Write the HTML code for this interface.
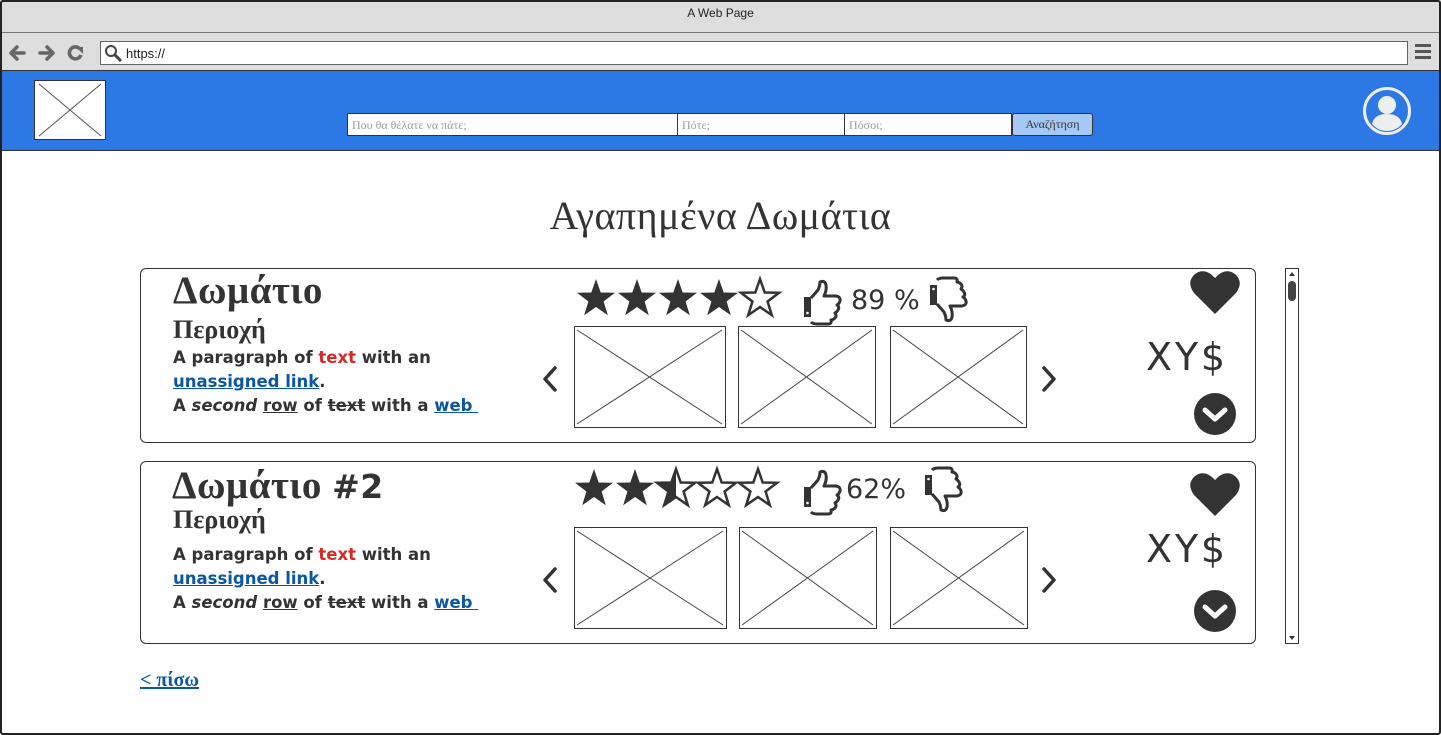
<!DOCTYPE html>
<html><head><meta charset="utf-8"><style>
*{margin:0;padding:0;box-sizing:border-box}
body{width:1441px;height:735px;position:relative;background:#fff;overflow:hidden;font-family:"Liberation Sans",sans-serif;color:#333}
.a{position:absolute}
.frame{left:0;top:0;width:1441px;height:735px;border:2px solid #222;border-radius:3px}
.serif{font-family:"Liberation Serif","DejaVu Serif",serif}
.p{font-family:"DejaVu Sans","Liberation Sans",sans-serif;font-weight:bold;font-size:16.5px;color:#333;line-height:24px;letter-spacing:0}
.lk{color:#0b57a0;text-decoration:underline}
.inp{height:23px;background:#fff;border:1px solid #333;font-family:"Liberation Serif",serif;font-size:12px;color:#999;padding:3px 4px;line-height:16px}
</style></head><body>
<div class="a" style="left:0;top:0;width:1441px;height:71px;background:#dedede"></div>
<div class="a" style="left:0;top:32px;width:1441px;height:1px;background:#777"></div>
<div class="a" style="left:0;top:6px;width:1441px;text-align:center;font-size:12px;color:#222">A Web Page</div>
<svg class="a" style="left:8px;top:42px" width="80" height="22" viewBox="0 0 80 22">
<path d="M3 11h13M3 11l6-6M3 11l6 6" stroke="#666" stroke-width="3.5" fill="none" stroke-linecap="round"/>
<path d="M45 11H32M45 11l-6-6M45 11l-6 6" stroke="#666" stroke-width="3.5" fill="none" stroke-linecap="round"/>
<path d="M72 7a6 6 0 1 0 1 6" stroke="#666" stroke-width="3.5" fill="none"/><path d="M68 5h7v7z" fill="#666"/>
</svg>
<div class="a" style="left:100px;top:41px;width:1308px;height:24px;background:#fff;border:1px solid #666"></div>
<svg class="a" style="left:104px;top:44px" width="20" height="18"><circle cx="7" cy="7" r="5" stroke="#444" stroke-width="2" fill="none"/><path d="M11 11l6 6" stroke="#444" stroke-width="3"/></svg>
<div class="a" style="left:126px;top:46px;font-size:13px;color:#222">https://</div>
<div class="a" style="left:1415px;top:44px;width:16px;height:3px;background:#555;box-shadow:0 6px 0 #555,0 12px 0 #555"></div>

<div class="a" style="left:0;top:70px;width:1441px;height:81px;background:#2c78e4;border-top:1px solid #333;border-bottom:1px solid #333"></div>
<svg class="a" style="left:34px;top:80px" width="72" height="60"><rect x=".5" y=".5" width="71" height="59" fill="#fff" stroke="#333"/><path d="M5 4L67 56M67 4L5 56" stroke="#555"/></svg>
<div class="a inp" style="left:347px;top:113px;width:331px">Που θα θέλατε να πάτε;</div>
<div class="a inp" style="left:677px;top:113px;width:168px">Πότε;</div>
<div class="a inp" style="left:844px;top:113px;width:168px">Πόσοι;</div>
<div class="a" style="left:1012px;top:113px;width:81px;height:23px;background:#a6c8f5;border:1px solid #333;border-radius:3px;font-family:'Liberation Serif',serif;font-size:12px;color:#333;text-align:center;line-height:21px">Αναζήτηση</div>
<svg class="a" style="left:1362px;top:86px" width="50" height="50"><circle cx="25" cy="25" r="22.5" stroke="#eee" stroke-width="3" fill="none"/><circle cx="25" cy="19" r="9" fill="#eee"/><path d="M10 38q2-10 15-10t15 10q-6 7-15 7t-15-7z" fill="#eee"/></svg>

<div class="a serif" style="left:0;top:192px;width:1441px;text-align:center;font-size:40px;color:#333;letter-spacing:0.5px">Αγαπημένα Δωμάτια</div>

<div class="a" style="left:140px;top:268px;width:1116px;height:175px;border:1px solid #333;border-radius:6px"></div>
<div class="a serif" style="left:173px;top:268px;font-size:39px;font-weight:bold;letter-spacing:0.5px">Δωμάτιο</div>
<div class="a serif" style="left:173px;top:315px;font-size:26px;font-weight:bold">Περιοχή</div>
<div class="a p" style="left:173px;top:346px">A paragraph of <span style="color:#d42a2a">text</span> with an<br><span class="lk">unassigned link</span>.<br>A <i>second</i> <u>row</u> of <s>text</s> with a <span class="lk">web&nbsp;</span></div>

<div class="a" style="left:140px;top:461px;width:1116px;height:183px;border:1px solid #333;border-radius:6px"></div>
<div class="a serif" style="left:172px;top:463px;font-size:39px;font-weight:bold;letter-spacing:0.5px">Δωμάτιο <span style="font-family:'DejaVu Sans',sans-serif;font-size:33px">#2</span></div>
<div class="a serif" style="left:173px;top:505px;font-size:26px;font-weight:bold">Περιοχή</div>
<div class="a p" style="left:173px;top:543px">A paragraph of <span style="color:#d42a2a">text</span> with an<br><span class="lk">unassigned link</span>.<br>A <i>second</i> <u>row</u> of <s>text</s> with a <span class="lk">web&nbsp;</span></div>

<svg class="a" style="left:0;top:0" width="1441" height="735">
<defs>
<path id="st" d="M20 1 L24.7 14.5 L39 14.8 L27.6 23.5 L31.8 37.2 L20 29 L8.2 37.2 L12.4 23.5 L1 14.8 L15.3 14.5 Z"/>
<g id="thu"><path d="M3 19h7v20H3z" fill="#333"/><path d="M10 20l7-8q2-4 2-8 5-2 6 3 1 5-2 11h12q5 1 4 5 -1 3-3 4 3 2 1 5-1 2-3 3 2 3 0 5-2 2-4 2 1 4-3 4H16q-4 0-6-2" fill="none" stroke="#333" stroke-width="3" stroke-linejoin="round"/><circle cx="6.5" cy="35" r="1.3" fill="#fff"/></g>
</defs>
<g fill="#333"><use href="#st" x="576" y="278"/><use href="#st" x="617" y="278"/><use href="#st" x="658" y="278"/><use href="#st" x="699" y="278"/></g>
<use href="#st" x="740" y="278" fill="none" stroke="#333" stroke-width="2.5"/>
<g fill="#333"><use href="#st" x="574" y="468"/><use href="#st" x="615" y="468"/></g>
<path d="M676 469 L676 497 L664.2 505.2 L668.4 491.5 L657 482.8 L671.3 482.5 Z" fill="#333"/>
<g fill="none" stroke="#333" stroke-width="2.5"><use href="#st" x="656" y="468"/><use href="#st" x="697" y="468"/><use href="#st" x="738" y="468"/></g>
<use href="#thu" x="801" y="278"/>
<g transform="translate(927 324) scale(1 -1)"><use href="#thu" x="0" y="0"/></g>
<use href="#thu" x="801" y="468"/>
<g transform="translate(922 514) scale(1 -1)"><use href="#thu" x="0" y="0"/></g>
<text x="851" y="309" font-family="DejaVu Sans,sans-serif" font-size="27" fill="#333">89 %</text>
<text x="846" y="498" font-family="DejaVu Sans,sans-serif" font-size="27" fill="#333">62%</text>
<g fill="#fff" stroke="#333">
<rect x="574.5" y="326.5" width="151" height="101"/><rect x="738.5" y="326.5" width="137" height="101"/><rect x="890.5" y="326.5" width="136" height="101"/>
<rect x="574.5" y="527.5" width="152" height="101"/><rect x="739.5" y="527.5" width="137" height="101"/><rect x="890.5" y="527.5" width="137" height="101"/>
</g>
<g stroke="#444" stroke-width="1">
<path d="M577 330L722 424M722 330L577 424M741 330L872 424M872 330L741 424M893 330L1023 424M1023 330L893 424"/>
<path d="M577 531L723 625M723 531L577 625M742 531L873 625M873 531L742 625M893 531L1024 625M1024 531L893 625"/>
</g>
<g fill="none" stroke="#333" stroke-width="3.5" stroke-linecap="round" stroke-linejoin="round">
<path d="M555 368L545 379L555 390M1044 368L1054 379L1044 390"/>
<path d="M555 569L545 580L555 591M1044 569L1054 580L1044 591"/>
</g>
<path d="M1215 314L1194 293Q1186 282 1195 274Q1205 267 1215 278Q1225 267 1235 274Q1244 282 1236 293Z" fill="#333"/>
<path d="M1215 516L1194 495Q1186 484 1195 476Q1205 469 1215 480Q1225 469 1235 476Q1244 484 1236 495Z" fill="#333"/>
<text x="1146" y="370" font-family="DejaVu Sans,sans-serif" font-size="38" fill="#333" textLength="79">XY$</text>
<text x="1146" y="562" font-family="DejaVu Sans,sans-serif" font-size="38" fill="#333" textLength="79">XY$</text>
<circle cx="1215" cy="414" r="21" fill="#333"/><path d="M1205 410l10 9 10-9" stroke="#fff" stroke-width="5" fill="none" stroke-linecap="round" stroke-linejoin="round"/>
<circle cx="1215" cy="611" r="21" fill="#333"/><path d="M1205 607l10 9 10-9" stroke="#fff" stroke-width="5" fill="none" stroke-linecap="round" stroke-linejoin="round"/>
<rect x="1285.5" y="268.5" width="13" height="375" fill="#fff" stroke="#333"/>
<path d="M1289 276l3-4 3 4z M1289 636l3 4 3-4z" fill="#333"/>
<rect x="1288" y="281" width="8" height="20" rx="4" fill="#444"/>
</svg>

<div class="a serif" style="left:140px;top:669px;font-size:20px;font-weight:bold;color:#0b57a0;text-decoration:underline">&lt; πίσω</div>
<div class="a frame"></div>
</body></html>
